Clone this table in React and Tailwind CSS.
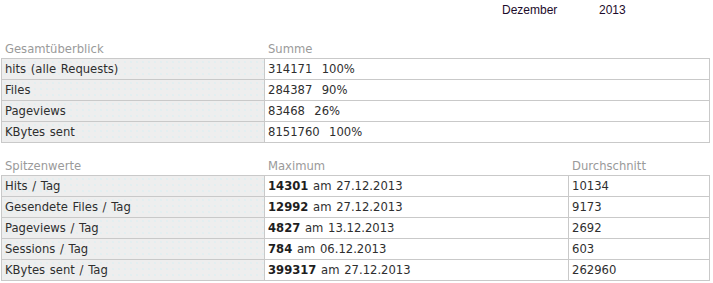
export default function App() {
  const font = "font-['DejaVu_Sans',sans-serif] text-[11.6px] [word-spacing:1px]";
  const dots =
    "bg-[#eeeeee] bg-[radial-gradient(circle,#d6eef2_0.6px,transparent_0.8px)] bg-[length:6px_6px]";
  const overview = [
    ["hits (alle Requests)", "314171", "100%"],
    ["Files", "284387", "90%"],
    ["Pageviews", "83468", "26%"],
    ["KBytes sent", "8151760", "100%"],
  ];
  const peaks = [
    ["Hits / Tag", "14301", "27.12.2013", "10134"],
    ["Gesendete Files / Tag", "12992", "27.12.2013", "9173"],
    ["Pageviews / Tag", "4827", "13.12.2013", "2692"],
    ["Sessions / Tag", "784", "06.12.2013", "603"],
    ["KBytes sent / Tag", "399317", "27.12.2013", "262960"],
  ];
  return (
    <div className={`${font} bg-white w-[713px] h-[283px] text-[#2e2e2e]`}>
      <div className="flex pt-[2px] h-[18px] pl-[502px] font-['Liberation_Sans',Arial,sans-serif] text-[12px] leading-[16px] text-[#1c0b2b] [word-spacing:0px]">
        <span className="w-[97px]">Dezember</span>
        <span>2013</span>
      </div>

      <div className="mt-[20px] ml-[1px] w-[709px]">
        <div className="grid grid-cols-[263px_1fr] h-[20px] leading-[16px] text-[#9a9a9a]">
          <div className="pl-[4px] pt-[3px]">Gesamtüberblick</div>
          <div className="pl-[4px] pt-[3px]">Summe</div>
        </div>
        <div className="grid grid-cols-[262px_1fr] gap-[1px] p-[1px] bg-[#c9c9c9] leading-[16px]">
          {overview.map(([label, value, pct]) => (
            <div key={label} className="contents">
              <div className={`${dots} h-[20px] pl-[3px] pt-[2px]`}>{label}</div>
              <div className="bg-white h-[20px] pl-[3px] pt-[2px] whitespace-pre">
                {value}
                {"  "}
                {pct}
              </div>
            </div>
          ))}
        </div>
      </div>

      <div className="mt-[12px] ml-[1px] w-[709px]">
        <div className="grid grid-cols-[263px_304px_1fr] h-[20px] leading-[16px] text-[#9a9a9a]">
          <div className="pl-[4px] pt-[3px]">Spitzenwerte</div>
          <div className="pl-[4px] pt-[3px]">Maximum</div>
          <div className="pl-[4px] pt-[3px]">Durchschnitt</div>
        </div>
        <div className="grid grid-cols-[262px_303px_1fr] gap-[1px] p-[1px] bg-[#c9c9c9] leading-[16px]">
          {peaks.map(([label, max, date, avg]) => (
            <div key={label} className="contents">
              <div className={`${dots} h-[20px] pl-[3px] pt-[2px]`}>{label}</div>
              <div className="bg-white h-[20px] pl-[3px] pt-[2px]">
                <span className="font-bold text-[#1e1e1e]">{max}</span> am {date}
              </div>
              <div className="bg-white h-[20px] pl-[3px] pt-[2px]">{avg}</div>
            </div>
          ))}
        </div>
      </div>
    </div>
  );
}
